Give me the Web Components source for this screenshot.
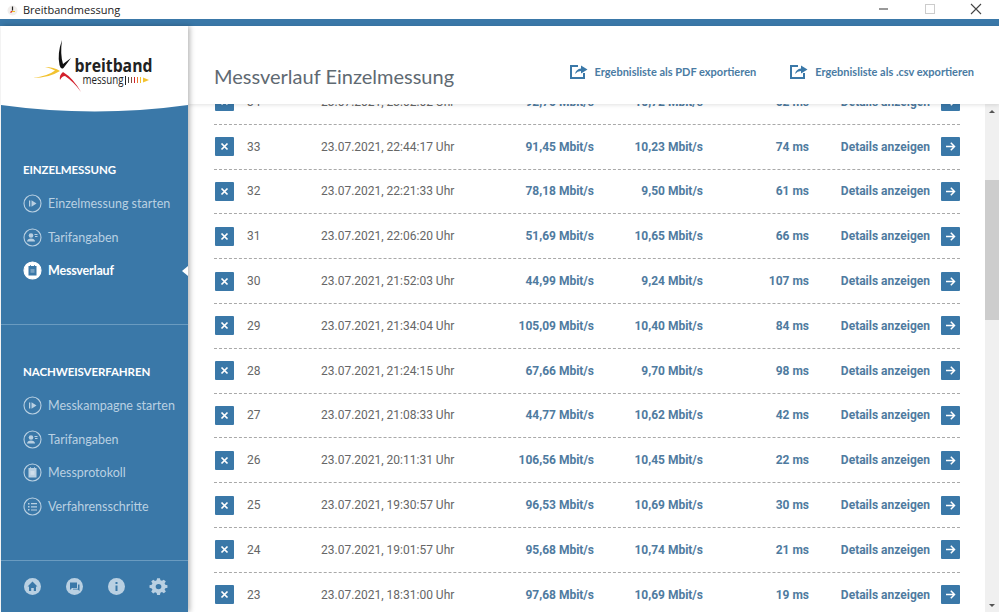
<!DOCTYPE html>
<html lang="de">
<head>
<meta charset="utf-8">
<title>Breitbandmessung</title>
<style>
    html, body { margin: 0; height: 100%; overflow: hidden; background: #fff; }
    body { font-family: "Roboto", "Liberation Sans", sans-serif; }
</style>
</head>
<body>
<bm-app></bm-app>

<template id="titlebar-template">
    <style>
        :host { display: flex; align-items: center; height: 19px; background: #fff; color: #222; font: 11px "Open Sans", "Liberation Sans", sans-serif; padding-left: 7px; }
        .name { margin-left: 5px; flex: 1; }
        svg { display: block; }
        .controls { display: flex; }
        .controls svg { width: 46px; height: 19px; }
    </style>
    <svg width="11" height="12" viewBox="0 0 11 12"><circle cx="5.5" cy="6.5" r="5" fill="#f1eeec"/><path d="M5.5 2.5v4" stroke="#222" stroke-width="1.2"/><path d="M5.5 7l-2 1.5" stroke="#d22" stroke-width="1.2"/><path d="M5 7.5h3" stroke="#eb2" stroke-width="1"/></svg>
    <span class="name">Breitbandmessung</span>
    <div class="controls">
        <svg viewBox="0 0 46 19"><path d="M18 9h9" stroke="#555" stroke-width="1.2"/></svg>
        <svg viewBox="0 0 46 19"><rect x="18.5" y="4.5" width="9" height="9" fill="none" stroke="#ccc"/></svg>
        <svg viewBox="0 0 46 19"><path d="M18 4l10 10M28 4L18 14" stroke="#444" stroke-width="1.1"/></svg>
    </div>
</template>

<template id="logo-template">
    <style>
        :host { display: block; height: 87px; flex: none; }
        svg { display: block; }
        text { font-family: "Open Sans", "Liberation Sans", sans-serif; fill: #222; }
    </style>
    <svg width="187" height="87" viewBox="0 0 187 87">
        <path d="M0 0H187V79Q94 92 0 79Z" fill="#fff"/>
        <path d="M61 14Q56 28 58.500 39Q60 44 62.500 42L70 32L62 38Q59 28 61 14Z" fill="#111"/>
        <path d="M32 52Q47 50 54 44.500Q50 42 44 41Q53 41 59 45Q48 52 32 52Z" fill="#f2c230"/>
        <path d="M80 66Q72 52 62 46Q58 49 59 54Q61 50 64 50Q73 56 80 66Z" fill="#d3202c"/>
        <text x="73.500" y="46" font-size="17" font-weight="700" textLength="78" lengthAdjust="spacingAndGlyphs">breitband</text>
        <text x="81.500" y="58" font-size="12" textLength="41" lengthAdjust="spacingAndGlyphs" fill="#333">messung</text>
        <path d="M124.500 50v9" stroke="#222" stroke-width="1"/><path d="M127.500 51v6" stroke="#444" stroke-width="1"/>
        <path d="M130.500 51v6" stroke="#8a4a3a" stroke-width="1"/><path d="M133.500 51v6" stroke="#d3202c" stroke-width="1"/>
        <path d="M136.500 51v6" stroke="#e8752c" stroke-width="1"/><path d="M139.500 51v6" stroke="#f2c230" stroke-width="1"/>
        <path d="M142 51.500l6 2.500-6 2.500z" fill="#f2c230"/>
    </svg>
</template>

<template id="nav-item-template">
    <style>
        :host { display: flex; align-items: center; height: 33.600px; padding-left: 22px; gap: 6px; color: #b9d0e2; font: 12.500px "Lato", "Liberation Sans", sans-serif; position: relative; white-space: nowrap; }
        :host([active]) { color: #fff; font-weight: 700; letter-spacing: -.2px; }
        svg { width: 19px; height: 19px; display: block; flex: none; }
        .ring { fill: none; stroke: #b9d0e2; stroke-width: 1.100; }
        .g { fill: #b9d0e2; }
        :host([active]) .ring { fill: #fff; stroke: #fff; }
        :host([active]) .g { fill: #3a78a8; }
        .pointer { display: none; position: absolute; right: 0; top: 12px; border: 5px solid transparent; border-left-width: 0; border-right: 6px solid #fff; }
        :host([active]) .pointer { display: block; }
    </style>
    <svg viewBox="0 0 19 19"><circle class="ring" cx="9.500" cy="9.500" r="8.500"/><g class="g"></g></svg>
    <slot></slot>
    <span class="pointer"></span>
</template>

<template id="nav-group-template">
    <style>
        :host { display: block; }
        h2 { margin: 0 0 9px 22px; color: #fff; font: 700 11.500px/16px "Lato", "Liberation Sans", sans-serif; letter-spacing: -.1px; }
    </style>
    <h2></h2>
    <slot></slot>
</template>

<template id="sidebar-template">
    <style>
        :host { display: flex; flex-direction: column; width: 187px; flex: none; background: #3a78a8; box-shadow: 2px 0 5px rgba(0,0,0,.28); position: relative; z-index: 3; margin-left: 1px; }
        .first { padding-top: 49px; height: 211px; box-sizing: border-box; flex: none; }
        .second { padding-top: 39px; flex: 1; border-top: 1px solid #6a9bc0; }
        .foot { flex: none; height: 52px; box-sizing: border-box; border-top: 1px solid #6a9bc0; display: flex; padding: 16px 0 0 22px; gap: 23px; }
        .foot svg { width: 19px; height: 19px; display: block; }
    </style>
    <bm-logo></bm-logo>
    <div class="first">
        <bm-nav-group heading="EINZELMESSUNG">
            <bm-nav-item icon="play">Einzelmessung starten</bm-nav-item>
            <bm-nav-item icon="user">Tarifangaben</bm-nav-item>
            <bm-nav-item icon="box" active>Messverlauf</bm-nav-item>
        </bm-nav-group>
    </div>
    <div class="second">
        <bm-nav-group heading="NACHWEISVERFAHREN">
            <bm-nav-item icon="play">Messkampagne starten</bm-nav-item>
            <bm-nav-item icon="user">Tarifangaben</bm-nav-item>
            <bm-nav-item icon="box">Messprotokoll</bm-nav-item>
            <bm-nav-item icon="list">Verfahrensschritte</bm-nav-item>
        </bm-nav-group>
    </div>
    <div class="foot">
        <svg viewBox="0 0 19 19"><circle cx="9.500" cy="9.500" r="8.500" fill="#b9d0e2"/><path d="M9.500 4.500L4.500 9.500H6V14H8.200V11H10.800V14H13V9.500H14.500Z" fill="#3a78a8"/></svg>
        <svg viewBox="0 0 19 19"><circle cx="9.500" cy="9.500" r="8.500" fill="#b9d0e2"/><path d="M5 5.500H12V11H7L5 13ZM13 7.500H14.500V14L12.800 12.500H8V11.800H13Z" fill="#3a78a8"/></svg>
        <svg viewBox="0 0 19 19"><circle cx="9.500" cy="9.500" r="8.500" fill="#b9d0e2"/><path d="M8.500 8.500H10.500V14H8.500ZM8.500 5H10.500V7H8.500Z" fill="#3a78a8"/></svg>
        <svg viewBox="0 0 19 19"><path fill="#b9d0e2" fill-rule="evenodd" d="M8 1h3l.5 2.300 1.600.7 2-1.300 2.100 2.100-1.300 2 .7 1.600 2.300.5v3l-2.300.5-.7 1.600 1.300 2-2.100 2.100-2-1.300-1.600.7L11 20H8l-.5-2.300-1.600-.7-2 1.300-2.100-2.100 1.300-2-.7-1.600L0 12V9l2.400-.5.7-1.600-1.300-2 2.100-2.100 2 1.300 1.600-.7ZM9.500 7.500a3 3 0 1 0 0 6 3 3 0 0 0 0-6Z" transform="translate(.5 .3) scale(.95 .88)"/></svg>
    </div>
</template>

<template id="export-template">
    <style>
        :host { display: inline-flex; align-items: center; gap: 7px; color: #4a7ba3; font: 700 11px "Lato", "Liberation Sans", sans-serif; white-space: nowrap; }
        svg { width: 19px; height: 16px; display: block; }
    </style>
    <svg viewBox="0 0 19 16"><path d="M9 3H2V15H15V10" fill="none" stroke="#3a78a8" stroke-width="2"/><path d="M6 11Q7 6 12 5.500V2.500L18.500 6.500L12 10.500V8Q8.500 8 6 11Z" fill="#3a78a8"/></svg>
    <slot></slot>
</template>

<template id="row-template">
    <style>
        :host { display: grid; grid-template-columns: 33px 74px 160px 113px 109px 106px 121px 30px; align-items: center; height: 43.800px; border-bottom: 1px dashed #a9a9a9; font: 12px "Roboto", "Liberation Sans", sans-serif; color: #666; white-space: nowrap; }
        .x, .go { width: 19px; height: 19px; background: #3a78a8; border-radius: 1px; display: block; margin-left: 1px; }
        .go { margin-left: auto; }
        .x svg, .go svg { display: block; width: 19px; height: 19px; }
        .b { font-weight: 700; color: #4f7ba0; text-align: right; }
    </style>
    <span class="x"><svg viewBox="0 0 19 19"><path d="M6.500 6.500l6 6M12.500 6.500l-6 6" stroke="#fff" stroke-width="1.700"/></svg></span>
    <span class="id"></span>
    <span class="date"></span>
    <span class="b down"></span>
    <span class="b up"></span>
    <span class="b ping"></span>
    <span class="b">Details anzeigen</span>
    <span class="go"><svg viewBox="0 0 19 19"><path d="M5 9.500h8M9.800 5.800l3.700 3.700-3.700 3.700" fill="none" stroke="#fff" stroke-width="1.500"/></svg></span>
</template>

<template id="scrollbar-template">
    <style>
        :host { display: flex; flex-direction: column; width: 14px; flex: none; background: #f0f0f0; position: absolute; right: 0; top: 78px; bottom: 0; }
        .end { height: 14px; display: flex; align-items: center; justify-content: center; flex: none; }
        .up { width: 0; height: 0; border: 3px solid transparent; border-top: 0; border-bottom: 3px solid #555; }
        .dn { width: 0; height: 0; border: 3px solid transparent; border-bottom: 0; border-top: 3px solid #555; }
        .track { flex: 1; }
        .thumb { height: 140px; background: #cdcdcd; margin-top: 62px; }
    </style>
    <div class="end"><span class="up"></span></div>
    <div class="track"><div class="thumb"></div></div>
    <div class="end"><span class="dn"></span></div>
</template>

<template id="main-template">
    <style>
        :host { display: flex; flex-direction: column; flex: 1; min-width: 0; position: relative; background: #fff; }
        header { flex: none; height: 78px; box-sizing: border-box; display: flex; align-items: flex-start; padding: 37px 25px 0 26px; background: #fff; box-shadow: 0 1px 4px rgba(0,0,0,.12); position: relative; z-index: 2; }
        h1 { margin: 0; font: 400 20px/26px "Lato", "Liberation Sans", sans-serif; color: #5f6a72; flex: 1; white-space: nowrap; }
        .exports { display: flex; gap: 33px; }
        .list { flex: 1; overflow: hidden; padding: 0 39px 0 26px; }
        .rows { margin-top: -24px; }
    </style>
    <header>
        <h1>Messverlauf Einzelmessung</h1>
        <div class="exports">
            <bm-export>Ergebnisliste als PDF exportieren</bm-export>
            <bm-export>Ergebnisliste als .csv exportieren</bm-export>
        </div>
    </header>
    <div class="list"><div class="rows"></div></div>
    <bm-scrollbar></bm-scrollbar>
</template>

<template id="app-template">
    <style>
        :host { display: flex; flex-direction: column; height: 612px; background: #fff; }
        .strip { height: 7px; background: #3a78a8; flex: none; }
        .body { display: flex; flex: 1; min-height: 0; }
    </style>
    <bm-titlebar></bm-titlebar>
    <div class="strip"></div>
    <div class="body">
        <bm-sidebar></bm-sidebar>
        <bm-main></bm-main>
    </div>
</template>

<script>
const NAV_ICONS = {
    play: '<path d="M6 6.500h1.300v6H6z"/><path d="M8.500 6.200l5 3.300-5 3.300z"/>',
    user: '<circle cx="8" cy="7.500" r="2.300"/><path d="M4 13.500c0-2 2-3 4-3s4 1 4 3z"/><path d="M11.500 6h3v.9h-3zM12 8h2.500v.9H12z"/>',
    box: '<path d="M5.500 5h1.500v-.8h1v.8h3v-.8h1v.8h1.500v9.500h-8z"/><path d="M7.500 8h4v3.800h-4z" fill="#fff" opacity=".3"/>',
    list: '<path d="M5 6h1.500v1.500H5zM5 9h1.500v1.500H5zM5 12h1.500v1.500H5zM8 6h6v1.200H8zM8 9.200h6v1.200H8zM8 12.400h6v1.200H8z"/>'
};

const RESULTS = [
    [34, '23.07.2021, 23:02:02 Uhr', '92,75 Mbit/s', '10,72 Mbit/s', '62 ms'],
    [33, '23.07.2021, 22:44:17 Uhr', '91,45 Mbit/s', '10,23 Mbit/s', '74 ms'],
    [32, '23.07.2021, 22:21:33 Uhr', '78,18 Mbit/s', '9,50 Mbit/s', '61 ms'],
    [31, '23.07.2021, 22:06:20 Uhr', '51,69 Mbit/s', '10,65 Mbit/s', '66 ms'],
    [30, '23.07.2021, 21:52:03 Uhr', '44,99 Mbit/s', '9,24 Mbit/s', '107 ms'],
    [29, '23.07.2021, 21:34:04 Uhr', '105,09 Mbit/s', '10,40 Mbit/s', '84 ms'],
    [28, '23.07.2021, 21:24:15 Uhr', '67,66 Mbit/s', '9,70 Mbit/s', '98 ms'],
    [27, '23.07.2021, 21:08:33 Uhr', '44,77 Mbit/s', '10,62 Mbit/s', '42 ms'],
    [26, '23.07.2021, 20:11:31 Uhr', '106,56 Mbit/s', '10,45 Mbit/s', '22 ms'],
    [25, '23.07.2021, 19:30:57 Uhr', '96,53 Mbit/s', '10,69 Mbit/s', '30 ms'],
    [24, '23.07.2021, 19:01:57 Uhr', '95,68 Mbit/s', '10,74 Mbit/s', '21 ms'],
    [23, '23.07.2021, 18:31:00 Uhr', '97,68 Mbit/s', '10,69 Mbit/s', '19 ms']
];

// every element here only clones its template into an open root
function simpleElement(tag, templateId) {
    customElements.define(tag, class extends HTMLElement {
        constructor() {
            super();
            const tpl = document.getElementById(templateId);
            this.attachShadow({ mode: 'open' }).append(tpl.content.cloneNode(true));
        }
    });
}

simpleElement('bm-titlebar', 'titlebar-template');
simpleElement('bm-logo', 'logo-template');
simpleElement('bm-export', 'export-template');
simpleElement('bm-scrollbar', 'scrollbar-template');
simpleElement('bm-sidebar', 'sidebar-template');
simpleElement('bm-app', 'app-template');

class BmNavGroup extends HTMLElement {
    constructor() {
        super();
        const tpl = document.getElementById('nav-group-template');
        this.attachShadow({ mode: 'open' }).append(tpl.content.cloneNode(true));
    }
    connectedCallback() {
        this.shadowRoot.querySelector('h2').textContent = this.getAttribute('heading');
    }
}
customElements.define('bm-nav-group', BmNavGroup);

class BmNavItem extends HTMLElement {
    constructor() {
        super();
        const tpl = document.getElementById('nav-item-template');
        this.attachShadow({ mode: 'open' }).append(tpl.content.cloneNode(true));
    }
    connectedCallback() {
        this.shadowRoot.querySelector('.g').innerHTML = NAV_ICONS[this.getAttribute('icon')];
    }
}
customElements.define('bm-nav-item', BmNavItem);

class BmRow extends HTMLElement {
    constructor() {
        super();
        const tpl = document.getElementById('row-template');
        this.attachShadow({ mode: 'open' }).append(tpl.content.cloneNode(true));
    }
    set data([id, date, down, up, ping]) {
        const root = this.shadowRoot;
        root.querySelector('.id').textContent = id;
        root.querySelector('.date').textContent = date;
        root.querySelector('.down').textContent = down;
        root.querySelector('.up').textContent = up;
        root.querySelector('.ping').textContent = ping;
    }
}
customElements.define('bm-row', BmRow);

class BmMain extends HTMLElement {
    constructor() {
        super();
        const tpl = document.getElementById('main-template');
        this.attachShadow({ mode: 'open' }).append(tpl.content.cloneNode(true));
        const rows = this.shadowRoot.querySelector('.rows');
        for (const result of RESULTS) {
            const row = document.createElement('bm-row');
            row.data = result;
            rows.append(row);
        }
    }
}
customElements.define('bm-main', BmMain);
</script>
</body>
</html>
